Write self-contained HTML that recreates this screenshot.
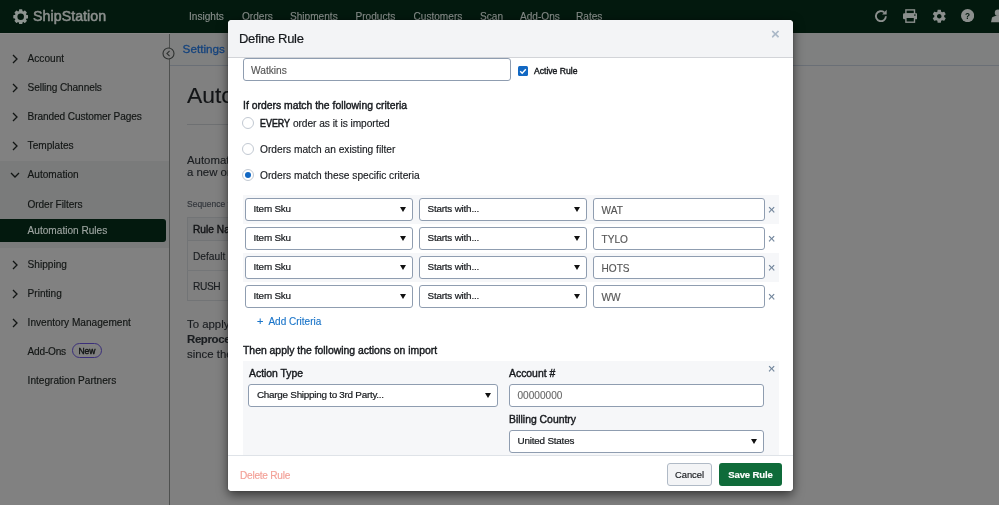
<!DOCTYPE html>
<html lang="en">
<head>
<meta charset="utf-8">
<title>ShipStation - Define Rule</title>
<style>
*{box-sizing:border-box;margin:0;padding:0}
html,body{width:999px;height:505px;overflow:hidden;background:#808080;font-family:"Liberation Sans",Arial,sans-serif;font-size:10px;color:#1b1f23;-webkit-text-stroke:.14px}
.abs{position:absolute;white-space:nowrap}
#topbar,#sidebar,#main,#modal{will-change:transform}
/* ---------- dimmed app chrome ---------- */
#topbar{position:absolute;left:0;top:0;width:999px;height:33px;background:#03190e}
#topbar .nav{position:absolute;top:10px;height:14px;line-height:14px;font-size:10.1px;color:#888e8b;white-space:nowrap}
#brand{position:absolute;left:33px;top:6px;height:20px;line-height:20px;font-size:14.2px;color:#8b8f8d;-webkit-text-stroke:.55px #8b8f8d;letter-spacing:.06px;white-space:nowrap}
#sidebar{position:absolute;left:0;top:33px;width:169px;height:472px;background:#818181}
#sidebar .open{position:absolute;left:0;top:128px;width:169px;height:87px;background:#7a7b7b}
#sidebar .cur{position:absolute;left:0;top:186px;width:166px;height:23px;background:#03190e;border-radius:0 3px 3px 0}
#sidebar .it{position:absolute;left:27.6px;height:14px;line-height:14px;font-size:10.1px;color:#121514;white-space:nowrap;-webkit-text-stroke:.15px currentColor}
#sidebar svg.chev{position:absolute;left:11px;width:8px;height:10px}
#divider{position:absolute;left:169px;top:33px;width:1px;height:472px;background:#4e504f}
#main{position:absolute;left:170px;top:33px;width:829px;height:472px;background:#808080}
#crumb{position:absolute;left:0;top:0;width:829px;height:33px;border-bottom:1px solid #6a6f76;background:#7f8080}
/* ---------- modal ---------- */
#modal{position:absolute;left:228px;top:20px;width:565px;height:471px;background:#fff;border-radius:4px;box-shadow:0 3.500px 11px rgba(0,0,0,.58),0 0 2px rgba(0,0,0,.25);overflow:hidden}
#mhead{position:absolute;left:0;top:0;width:565px;height:38px;background:#f3f4f6;border-bottom:1px solid #d2d4d8}
#mhead .ttl{position:absolute;left:11px;top:9px;height:20px;line-height:20px;font-size:13px;color:#16191d;letter-spacing:-0.3px;-webkit-text-stroke:.2px #16191d}
#mfoot{position:absolute;left:0;top:435px;width:565px;height:36px;background:#fff;border-top:1px solid #dfe3e8}
.inp{position:absolute;height:23px;border:1px solid #8f9db0;border-radius:3px;background:#fff;font-size:10.1px;line-height:23px;padding-left:7.5px;color:#555;white-space:nowrap;overflow:hidden}
.sel{position:absolute;height:23px;border:1px solid #8f9db0;border-radius:3px;background:#fff;font-size:9.9px;letter-spacing:-.2px;line-height:20px;padding-left:7.5px;color:#16191d;-webkit-text-stroke:.2px #16191d;white-space:nowrap;overflow:hidden}
.sel:after{content:"";position:absolute;right:6.5px;top:8px;border-left:3.5px solid transparent;border-right:3.5px solid transparent;border-top:5px solid #111}
.med{-webkit-text-stroke:.4px currentColor}
.lbl.med{font-size:10.4px}
.lbl{position:absolute;font-size:10.2px;height:14px;line-height:15px;color:#16191d;white-space:nowrap}
.radio{position:absolute;left:14px;width:12px;height:12px;border:1px solid #c2c9d2;border-radius:50%;background:#fff}
.radio.on:after{content:"";position:absolute;left:2px;top:2px;width:6px;height:6px;border-radius:50%;background:#1268c3}
.row{position:absolute;left:15px;width:536px;height:29px}
.row.alt{background:#f6f7f9}
.x{position:absolute;font-size:12.5px;line-height:12px;height:12px;width:10px;text-align:center;color:#6d8198}
</style>
</head>
<body>
<!-- top bar -->
<div id="topbar">
  <svg style="position:absolute;left:12.8px;top:8.600px" width="15.4" height="15.4" viewBox="0 0 17 17">
    <g fill="#8e9591">
      <circle cx="8.5" cy="8.5" r="6.6"/>
      <g id="teeth">
        <rect x="6.6" y="0.3" width="3.8" height="3" rx=".8"/>
        <rect x="6.6" y="13.7" width="3.8" height="3" rx=".8"/>
        <rect x="0.3" y="6.6" width="3" height="3.8" rx=".8"/>
        <rect x="13.7" y="6.6" width="3" height="3.8" rx=".8"/>
      </g>
      <g transform="rotate(45 8.5 8.5)">
        <rect x="6.6" y="0.3" width="3.8" height="3" rx=".8"/>
        <rect x="6.6" y="13.7" width="3.8" height="3" rx=".8"/>
        <rect x="0.3" y="6.6" width="3" height="3.8" rx=".8"/>
        <rect x="13.7" y="6.6" width="3" height="3.8" rx=".8"/>
      </g>
    </g>
    <circle cx="8.5" cy="8.5" r="3.600" fill="#03190e"/>
  </svg>
  <div id="brand">ShipStation</div>
  <div class="nav" style="left:189px">Insights</div>
  <div class="nav" style="left:242px">Orders</div>
  <div class="nav" style="left:290px">Shipments</div>
  <div class="nav" style="left:355.5px">Products</div>
  <div class="nav" style="left:413.5px">Customers</div>
  <div class="nav" style="left:480px">Scan</div>
  <div class="nav" style="left:520px">Add-Ons</div>
  <div class="nav" style="left:576px">Rates</div>
  <!-- right icons -->
  <svg style="position:absolute;left:874px;top:9px" width="14" height="14" viewBox="0 0 14 14" fill="none" stroke="#8b8f8d" stroke-width="1.85">
    <path d="M11.9 7.300a5 5 0 1 1-1.700-3.900"/>
    <path d="M12.700 0.800v4.600H8.100z" fill="#8b8f8d" stroke="none"/>
  </svg>
  <svg style="position:absolute;left:903px;top:9px" width="14.4" height="14" viewBox="0 0 14.4 14">
    <rect x="2.900" y="0.900" width="8.600" height="4" fill="none" stroke="#8b8f8d" stroke-width="1.400"/>
    <rect x="0" y="4.200" width="14.400" height="6" rx="1.200" fill="#8b8f8d"/>
    <rect x="2.900" y="8.300" width="8.600" height="4.900" fill="#03190e" stroke="#8b8f8d" stroke-width="1.400"/>
    <circle cx="11.900" cy="6.100" r=".8" fill="#03190e"/>
  </svg>
  <svg style="position:absolute;left:930.8px;top:7.700px" width="16.500" height="16.500" viewBox="0 0 24 24" fill="#8b8f8d">
    <path d="M19.14 12.94c.04-.3.06-.61.06-.94 0-.32-.02-.64-.07-.94l2.03-1.58a.49.49 0 0 0 .12-.61l-1.920-3.320a.488.488 0 0 0-.59-.22l-2.390.96c-.5-.38-1.030-.7-1.620-.94l-.36-2.540a.484.484 0 0 0-.48-.41h-3.840c-.24 0-.43.17-.47.41l-.36 2.540c-.59.24-1.130.57-1.620.94l-2.390-.96c-.22-.08-.47 0-.59.22L2.740 8.870c-.12.21-.08.47.12.61l2.030 1.580c-.05.3-.09.63-.09.94s.02.64.07.94l-2.030 1.580a.49.49 0 0 0-.12.61l1.920 3.320c.12.22.37.29.59.22l2.390-.96c.5.38 1.030.7 1.620.94l.36 2.540c.05.24.24.41.48.41h3.840c.24 0 .44-.17.47-.41l.36-2.540c.59-.24 1.130-.56 1.620-.94l2.390.96c.22.08.47 0 .59-.22l1.920-3.320c.12-.22.07-.47-.12-.61l-2.010-1.580zM12 15.300c-1.820 0-3.300-1.480-3.300-3.300s1.480-3.300 3.300-3.300 3.300 1.480 3.300 3.300-1.480 3.300-3.300 3.300z"/>
  </svg>
  <svg style="position:absolute;left:961.200px;top:9.300px" width="13.200" height="13.200" viewBox="0 0 14 14">
    <circle cx="7" cy="7" r="7" fill="#8b8f8d"/>
    <text x="7" y="10.300" text-anchor="middle" font-family="Liberation Sans, sans-serif" font-weight="bold" font-size="8.800" fill="#03190e">?</text>
  </svg>
  <svg style="position:absolute;left:990.500px;top:9px" width="14" height="14" viewBox="0 0 14 14" fill="#8b8f8d">
    <circle cx="7" cy="3.700" r="3.200"/>
    <path d="M0 13.200l1-4.600c1.500-1.300 3.500-1.800 6-1.800s4.500.5 6 1.800l1 4.600z"/>
  </svg>
</div>

<!-- sidebar -->
<div id="sidebar">
  <div class="open"></div>
  <div class="cur"></div>
  <svg class="chev" style="top:21px" viewBox="0 0 8 10"><path d="M2 1l4 4-4 4" fill="none" stroke="#121514" stroke-width="1.3"/></svg>
  <div class="it" style="top:19px">Account</div>
  <svg class="chev" style="top:50px" viewBox="0 0 8 10"><path d="M2 1l4 4-4 4" fill="none" stroke="#121514" stroke-width="1.3"/></svg>
  <div class="it" style="top:48px;letter-spacing:-.1px">Selling Channels</div>
  <svg class="chev" style="top:79px" viewBox="0 0 8 10"><path d="M2 1l4 4-4 4" fill="none" stroke="#121514" stroke-width="1.3"/></svg>
  <div class="it" style="top:77px;letter-spacing:-.09px">Branded Customer Pages</div>
  <svg class="chev" style="top:108px" viewBox="0 0 8 10"><path d="M2 1l4 4-4 4" fill="none" stroke="#121514" stroke-width="1.3"/></svg>
  <div class="it" style="top:106px">Templates</div>
  <svg class="chev" style="top:138px;left:10px;width:10px;height:8px" viewBox="0 0 10 8"><path d="M1 2l4 4 4-4" fill="none" stroke="#121514" stroke-width="1.3"/></svg>
  <div class="it" style="top:135px">Automation</div>
  <div class="it" style="top:165px;letter-spacing:-.1px">Order Filters</div>
  <div class="it" style="top:191px;color:#9da4a0">Automation Rules</div>
  <svg class="chev" style="top:227px" viewBox="0 0 8 10"><path d="M2 1l4 4-4 4" fill="none" stroke="#121514" stroke-width="1.3"/></svg>
  <div class="it" style="top:225px">Shipping</div>
  <svg class="chev" style="top:256px" viewBox="0 0 8 10"><path d="M2 1l4 4-4 4" fill="none" stroke="#121514" stroke-width="1.3"/></svg>
  <div class="it" style="top:254px">Printing</div>
  <svg class="chev" style="top:285px" viewBox="0 0 8 10"><path d="M2 1l4 4-4 4" fill="none" stroke="#121514" stroke-width="1.3"/></svg>
  <div class="it" style="top:283px">Inventory Management</div>
  <div class="it" style="top:312px;letter-spacing:-.22px">Add-Ons</div>
  <div class="abs" style="left:72px;top:310px;width:30px;height:15px;border:1px solid #3b2f7a;border-radius:8px;font-size:8.5px;line-height:13px;padding-top:.6px;text-align:center;color:#121514;-webkit-text-stroke:.4px #121514">New</div>
  <div class="it" style="top:341px">Integration Partners</div>
</div>
<div id="divider"></div>
<div class="abs" style="left:0;top:33px;width:999px;height:1px;background:#898888"></div>

<!-- main (dimmed) -->
<div id="main">
  <div id="crumb"></div>
  <div class="abs" style="left:12.6px;top:8px;font-size:11.7px;line-height:16px;color:#15437d;-webkit-text-stroke:.3px #15437d">Settings</div>
  <div class="abs" style="left:17px;top:46.3px;font-size:22.9px;line-height:32px;color:#121416">Automation Rules</div>
  <div class="abs" style="left:17px;top:91px;width:600px;height:1px;background:#6e7072"></div>
  <div class="abs" style="left:17px;top:122px;font-size:11.4px;line-height:11.5px;color:#1a1d20">Automation rules are applied to<br>a new order is imported</div>
  <div class="abs" style="left:17px;top:166px;font-size:8.5px;line-height:11px;color:#30343a">Sequence from top to bottom</div>
  <div class="abs" style="left:17px;top:184px;width:600px;height:84px;border:1px solid #727476;background:#808080"></div>
  <div class="abs" style="left:17px;top:184px;width:600px;height:24px;border:1px solid #727476;background:#7b7c7d"></div>
  <div class="abs med" style="left:23px;top:190px;font-size:10.2px;line-height:14px;color:#121416">Rule Name</div>
  <div class="abs" style="left:17px;top:237px;width:600px;height:1px;background:#747678"></div>
  <div class="abs" style="left:23px;top:217px;font-size:10.2px;line-height:14px;color:#1a1d20">Default It</div>
  <div class="abs" style="left:23px;top:247px;font-size:10.2px;line-height:14px;color:#1a1d20;letter-spacing:-.4px">RUSH</div>
  <div class="abs" style="left:17px;top:284px;font-size:11.4px;line-height:15px;color:#1a1d20">To apply these rules to orders<br><b style="letter-spacing:-.35px">Reprocess Automation Rules</b><br>since the rule was created</div>
</div>
<!-- collapse handle -->
<svg class="abs" style="left:162.300px;top:47.300px" width="13" height="13" viewBox="0 0 13 13"><circle cx="6.500" cy="6.500" r="5.500" fill="#808080" stroke="#2e3130" stroke-width="1.100"/><path d="M7.600 3.800L4.900 6.500l2.700 2.700" fill="none" stroke="#2e3130" stroke-width="1.100"/></svg>

<!-- modal -->
<div id="modal">
  <div id="mbody">
    <div class="inp" style="left:15px;top:38px;width:268px;font-size:10.2px;line-height:23px;padding-left:7px">Watkins</div>
    <!-- checkbox -->
    <svg class="abs" style="left:290px;top:46px" width="10" height="10" viewBox="0 0 10 10"><rect width="10" height="10" rx="1.500" fill="#1268c3"/><path d="M2.200 5.200l2 2 3.600-4" fill="none" stroke="#fff" stroke-width="1.400"/></svg>
    <div class="abs med" style="left:306px;top:45px;font-size:8.6px;line-height:12px;color:#16191d">Active Rule</div>

    <div class="lbl med" style="left:15px;top:78px">If orders match the following criteria</div>
    <div class="radio" style="top:97px"></div>
    <div class="lbl" style="left:32px;top:96px"><span class="med" style="-webkit-text-stroke-width:.5px;display:inline-block;transform:scaleX(.875);transform-origin:0 50%;margin-right:-4.3px">EVERY</span>&nbsp;<span style="letter-spacing:-0.05px">order as it is imported</span></div>
    <div class="radio" style="top:123px"></div>
    <div class="lbl" style="left:32px;top:122px">Orders match an existing filter</div>
    <div class="radio on" style="top:149px"></div>
    <div class="lbl" style="left:32px;top:148px">Orders match these specific criteria</div>

    <!-- criteria rows -->
    <div class="row alt" style="top:175px"></div>
    <div class="row" style="top:204px"></div>
    <div class="row alt" style="top:233px"></div>
    <div class="row" style="top:262px"></div>

    <div class="sel" style="left:17px;top:178px;width:168px">Item Sku</div>
    <div class="sel" style="left:191px;top:178px;width:168px">Starts with...</div>
    <div class="inp" style="left:365px;top:178px;width:172px">WAT</div>
    <div class="x" style="left:538.6px;top:184px">×</div>

    <div class="sel" style="left:17px;top:207px;width:168px">Item Sku</div>
    <div class="sel" style="left:191px;top:207px;width:168px">Starts with...</div>
    <div class="inp" style="left:365px;top:207px;width:172px">TYLO</div>
    <div class="x" style="left:538.6px;top:213px">×</div>

    <div class="sel" style="left:17px;top:236px;width:168px">Item Sku</div>
    <div class="sel" style="left:191px;top:236px;width:168px">Starts with...</div>
    <div class="inp" style="left:365px;top:236px;width:172px">HOTS</div>
    <div class="x" style="left:538.6px;top:242px">×</div>

    <div class="sel" style="left:17px;top:265px;width:168px">Item Sku</div>
    <div class="sel" style="left:191px;top:265px;width:168px">Starts with...</div>
    <div class="inp" style="left:365px;top:265px;width:172px">WW</div>
    <div class="x" style="left:538.6px;top:271px">×</div>

    <div class="abs" style="left:29px;top:294px;font-size:10px;line-height:15px;color:#1b75c9"><span style="font-size:11px">+</span>&nbsp; Add Criteria</div>

    <div class="lbl med" style="left:15px;top:323px">Then apply the following actions on import</div>

    <!-- action panel -->
    <div class="abs" style="left:15px;top:341px;width:536px;height:100px;background:#f6f7f9"></div>
    <div class="lbl med" style="left:21px;top:346px">Action Type</div>
    <div class="sel" style="left:20px;top:364px;width:250px;padding-left:8px;letter-spacing:-0.26px">Charge Shipping to 3rd Party...</div>
    <div class="lbl med" style="left:281px;top:346px">Account #</div>
    <div class="inp" style="left:281px;top:364px;width:255px;color:#6a6a6a;line-height:22px">00000000</div>
    <div class="lbl med" style="left:281px;top:392px">Billing Country</div>
    <div class="sel" style="left:281px;top:410px;width:255px">United States</div>
    <div class="x" style="left:538.6px;top:343px">×</div>
  </div>

  <div id="mhead">
    <div class="ttl">Define Rule</div>
    <div class="x" style="left:542.300px;top:8.200px;font-size:15px;color:#a7b5c5;-webkit-text-stroke:.45px #a7b5c5">×</div>
  </div>
  <div id="mfoot">
    <div class="abs" style="left:12px;top:12px;font-size:10.1px;line-height:15px;color:#f3a198;-webkit-text-stroke:.15px #f3a198;letter-spacing:-0.25px">Delete Rule</div>
    <div class="abs" style="left:439px;top:7px;width:45px;height:23px;border:1px solid #b0bac6;border-radius:3px;background:#f3f4f6;font-size:9.4px;line-height:21px;text-align:center;color:#16191d;-webkit-text-stroke:.15px #16191d">Cancel</div>
    <div class="abs" style="left:491px;top:7px;width:63px;height:23px;border-radius:3px;background:#0f6b3a;font-size:9.6px;font-weight:bold;line-height:23px;text-align:center;color:#fff;letter-spacing:-0.15px">Save Rule</div>
  </div>
</div>
</body>
</html>
